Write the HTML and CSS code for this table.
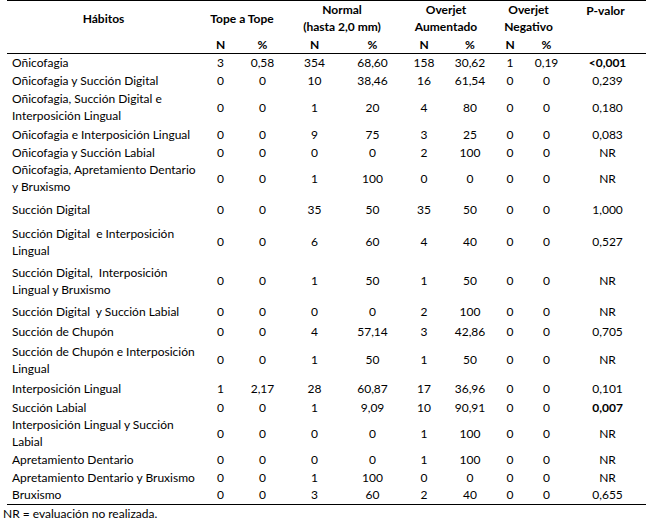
FILE: index.html
```html
<!DOCTYPE html>
<html lang="es">
<head>
    <meta charset="UTF-8">
    <title>Hábitos y overjet</title>
    <link rel="stylesheet" href="styles.css">
</head>
<body>
    <table class="habits">
        <colgroup>
            <col class="col-name">
            <col class="col-a"><col class="col-b">
            <col class="col-c"><col class="col-d">
            <col class="col-e"><col class="col-f">
            <col class="col-g"><col class="col-h">
            <col class="col-p">
        </colgroup>
        <thead>
            <tr class="head-top">
                <th class="name-head">Hábitos</th>
                <th colspan="2" class="mid-head">Tope a Tope</th>
                <th colspan="2">Normal<br>(hasta 2,0 mm)</th>
                <th colspan="2">Overjet<br>Aumentado</th>
                <th colspan="2">Overjet<br>Negativo</th>
                <th rowspan="2" class="p-head">P-valor</th>
            </tr>
            <tr class="head-sub">
                <th></th>
                <th>N</th><th>%</th>
                <th>N</th><th>%</th>
                <th>N</th><th>%</th>
                <th>N</th><th>%</th>
            </tr>
        </thead>
        <tbody>
            <tr class="h18"><td>Oñicofagia</td><td>3</td><td>0,58</td><td>354</td><td>68,60</td><td>158</td><td>30,62</td><td>1</td><td>0,19</td><td class="p"><b>&lt;0,001</b></td></tr>
            <tr class="h18"><td>Oñicofagia y Succión Digital</td><td>0</td><td>0</td><td>10</td><td>38,46</td><td>16</td><td>61,54</td><td>0</td><td>0</td><td class="p">0,239</td></tr>
            <tr class="h36"><td>Oñicofagia, Succión Digital e Interposición Lingual</td><td>0</td><td>0</td><td>1</td><td>20</td><td>4</td><td>80</td><td>0</td><td>0</td><td class="p">0,180</td></tr>
            <tr class="h18"><td>Oñicofagia e Interposición Lingual</td><td>0</td><td>0</td><td>9</td><td>75</td><td>3</td><td>25</td><td>0</td><td>0</td><td class="p">0,083</td></tr>
            <tr class="h18"><td>Oñicofagia y Succión Labial</td><td>0</td><td>0</td><td>0</td><td>0</td><td>2</td><td>100</td><td>0</td><td>0</td><td class="p">NR</td></tr>
            <tr class="h34"><td>Oñicofagia, Apretamiento Dentario y Bruxismo</td><td>0</td><td>0</td><td>1</td><td>100</td><td>0</td><td>0</td><td>0</td><td>0</td><td class="p">NR</td></tr>
            <tr class="h28"><td>Succión Digital</td><td>0</td><td>0</td><td>35</td><td>50</td><td>35</td><td>50</td><td>0</td><td>0</td><td class="p">1,000</td></tr>
            <tr class="h37"><td>Succión Digital&nbsp; e Interposición Lingual</td><td>0</td><td>0</td><td>6</td><td>60</td><td>4</td><td>40</td><td>0</td><td>0</td><td class="p">0,527</td></tr>
            <tr class="h41"><td>Succión Digital,&nbsp; Interposición Lingual y Bruxismo</td><td>0</td><td>0</td><td>1</td><td>50</td><td>1</td><td>50</td><td>0</td><td>0</td><td class="p">NR</td></tr>
            <tr class="h21"><td>Succión Digital&nbsp; y Succión Labial</td><td>0</td><td>0</td><td>0</td><td>0</td><td>2</td><td>100</td><td>0</td><td>0</td><td class="p">NR</td></tr>
            <tr class="h19"><td>Succión de Chupón</td><td>0</td><td>0</td><td>4</td><td>57,14</td><td>3</td><td>42,86</td><td>0</td><td>0</td><td class="p">0,705</td></tr>
            <tr class="h37"><td>Succión de Chupón e Interposición Lingual</td><td>0</td><td>0</td><td>1</td><td>50</td><td>1</td><td>50</td><td>0</td><td>0</td><td class="p">NR</td></tr>
            <tr class="h20"><td>Interposición Lingual</td><td>1</td><td>2,17</td><td>28</td><td>60,87</td><td>17</td><td>36,96</td><td>0</td><td>0</td><td class="p">0,101</td></tr>
            <tr class="h18"><td>Succión Labial</td><td>0</td><td>0</td><td>1</td><td>9,09</td><td>10</td><td>90,91</td><td>0</td><td>0</td><td class="p"><b>0,007</b></td></tr>
            <tr class="h34"><td>Interposición Lingual y Succión Labial</td><td>0</td><td>0</td><td>0</td><td>0</td><td>1</td><td>100</td><td>0</td><td>0</td><td class="p">NR</td></tr>
            <tr class="h18"><td>Apretamiento Dentario</td><td>0</td><td>0</td><td>0</td><td>0</td><td>1</td><td>100</td><td>0</td><td>0</td><td class="p">NR</td></tr>
            <tr class="h18"><td>Apretamiento Dentario y Bruxismo</td><td>0</td><td>0</td><td>1</td><td>100</td><td>0</td><td>0</td><td>0</td><td>0</td><td class="p">NR</td></tr>
            <tr class="h18"><td>Bruxismo</td><td>0</td><td>0</td><td>3</td><td>60</td><td>2</td><td>40</td><td>0</td><td>0</td><td class="p">0,655</td></tr>
        </tbody>
    </table>
    <p class="note">NR = evaluación no realizada.</p>
</body>
</html>
```

FILE: styles.css
```css
body {
    margin: 0;
    background: #fff;
    color: #000;
    font-family: Lato, "Open Sans", sans-serif;
    font-size: 12px;
}

/* Table */
.habits {
    margin-left: 7px;
    width: 639px;
    border-collapse: collapse;
    table-layout: fixed;
    border-top: 1.5px solid #000;
    border-bottom: 1.5px solid #000;
}

.col-name { width: 193px; }
.col-a { width: 41px; }
.col-b { width: 43px; }
.col-c { width: 61px; }
.col-d { width: 55px; }
.col-e { width: 48px; }
.col-f { width: 44px; }
.col-g { width: 36px; }
.col-h { width: 37px; }
.col-p { width: 81px; }

.habits th,
.habits td {
    padding: 0;
    line-height: 17px;
    text-align: center;
    vertical-align: middle;
}

.habits th {
    font-weight: bold;
}

/* Header */
.head-top {
    height: 35px;
}

.head-top th {
    vertical-align: top;
}

.head-top .name-head,
.head-top .mid-head {
    vertical-align: middle;
}

.head-top .p-head {
    padding-top: 1px;
}

.head-sub {
    height: 17px;
    border-bottom: 1.5px solid #000;
}

/* Body */
.habits td:first-child {
    text-align: left;
    padding-left: 5px;
}

.habits td.p {
    padding-left: 4px;
}

.h18 { height: 18px; }
.h19 { height: 19px; }
.h20 { height: 20px; }
.h21 { height: 21px; }
.h28 { height: 28px; }
.h34 { height: 34px; }
.h36 { height: 36px; }
.h37 { height: 37px; }
.h41 { height: 41px; }

.note {
    margin: 0;
    padding: 0 0 0 3px;
    line-height: 17px;
}
```
